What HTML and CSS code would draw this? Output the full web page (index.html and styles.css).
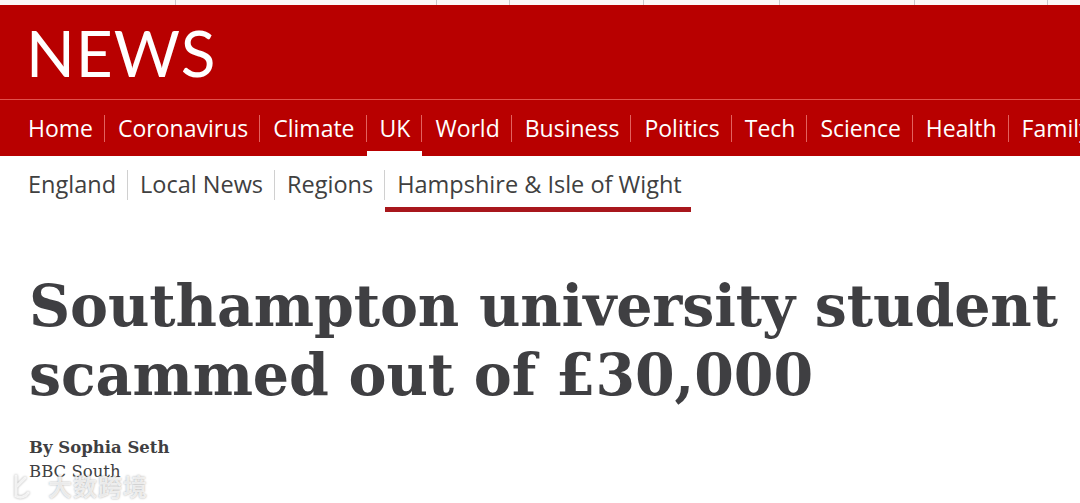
FILE: index.html
```html
<!DOCTYPE html>
<html lang="en">
<head>
<meta charset="utf-8">
<title>Southampton university student scammed out of £30,000 - BBC News</title>
<link rel="stylesheet" href="styles.css">
</head>
<body>
<div class="topstrip">
  <span class="seg" style="width:176px"></span>
  <span class="seg" style="width:261px"></span>
  <span class="seg" style="width:73px"></span>
  <span class="seg" style="width:134px"></span>
  <span class="seg" style="width:136px"></span>
  <span class="seg" style="width:135px"></span>
  <span class="seg" style="width:133px"></span>
</div>
<header class="masthead">
  <div class="logo">NEWS</div>
</header>
<nav class="nav">
  <a class="nav-item">Home</a>
  <a class="nav-item">Coronavirus</a>
  <a class="nav-item">Climate</a>
  <a class="nav-item active">UK</a>
  <a class="nav-item">World</a>
  <a class="nav-item">Business</a>
  <a class="nav-item">Politics</a>
  <a class="nav-item">Tech</a>
  <a class="nav-item">Science</a>
  <a class="nav-item">Health</a>
  <a class="nav-item">Family &amp; Education</a>
</nav>
<nav class="subnav">
  <a class="sub-item">England</a>
  <a class="sub-item">Local News</a>
  <a class="sub-item">Regions</a>
  <a class="sub-item active">Hampshire &amp; Isle of Wight</a>
</nav>
<main class="article">
  <h1 class="headline">Southampton university student scammed out of £30,000</h1>
  <div class="byline">
    <div class="author">By Sophia Seth</div>
    <div class="role">BBC South</div>
  </div>
</main>
<div class="watermark">
  <svg class="wm-icon" width="24" height="26" viewBox="0 0 24 26" aria-hidden="true">
    <path d="M8 3 L8 23 M8 14 L17 5 M20 20 A9 9 0 0 1 8 23" fill="none" stroke="rgba(255,255,255,0.8)" stroke-width="3" stroke-linecap="round"/>
  </svg>
  <span class="wm-text">大数跨境</span>
</div>
</body>
</html>
```
FILE: styles.css
```css
html, body {
  margin: 0;
  padding: 0;
  background: #ffffff;
  overflow: hidden;
}
body {
  width: 1080px;
  height: 503px;
  position: relative;
  font-family: "Open Sans", "Noto Sans", sans-serif;
}
.topstrip {
  height: 5px;
  display: flex;
  background: #fbf7f7;
}
.topstrip .seg {
  display: block;
  height: 5px;
  border-right: 1px solid #c9c9cc;
  box-sizing: border-box;
}
.masthead {
  background: #b80000;
  height: 95px;
  box-sizing: border-box;
  border-bottom: 1px solid #e2504c;
  padding-left: 26px;
  display: flex;
  align-items: flex-start;
}
.logo {
  color: #ffffff;
  font-family: "Lato", "Open Sans", sans-serif;
  font-weight: 400;
  font-size: 64px;
  line-height: 1;
  margin-top: 16px;
  letter-spacing: 1px;
}
.nav {
  background: #b80000;
  height: 56px;
  display: flex;
  align-items: stretch;
  padding-left: 15px;
  white-space: nowrap;
  overflow: hidden;
}
.nav-item {
  color: #ffffff;
  font-size: 23px;
  line-height: 56px;
  padding: 0 12px 0 13px;
  position: relative;
  box-sizing: border-box;
}
.nav-item + .nav-item::before {
  content: "";
  position: absolute;
  left: -1px;
  top: 15px;
  height: 27px;
  border-left: 1px solid #e3625e;
}
.nav-item.active {
  box-shadow: inset 0 -5px 0 #ffffff;
}
.subnav {
  height: 57px;
  display: flex;
  align-items: stretch;
  padding-left: 16px;
  white-space: nowrap;
}
.sub-item {
  color: #404040;
  font-size: 23.5px;
  line-height: 56px;
  padding: 0 12px;
  position: relative;
}
.sub-item + .sub-item::before {
  content: "";
  position: absolute;
  left: -1px;
  top: 14px;
  height: 30px;
  border-left: 1px solid #d0d0d0;
}
.sub-item.active {
  box-shadow: inset 0 -5px 0 #a8171c;
  padding-right: 9px;
  height: 56px;
}
.article {
  padding: 58px 0 0 29px;
}
.headline {
  margin: 0;
  color: #3f3f42;
  font-family: "DejaVu Serif", serif;
  font-weight: 700;
  font-size: 57px;
  line-height: 69px;
  letter-spacing: -0.1px;
  width: 1060px;
}
.byline {
  margin-top: 27px;
  color: #3f3f42;
  font-family: "DejaVu Serif", serif;
  font-size: 16.5px;
  line-height: 24px;
}
.author {
  font-weight: 700;
}
.watermark {
  position: absolute;
  left: 8px;
  top: 468px;
  display: flex;
  align-items: center;
  gap: 16px;
}
.wm-icon {
  display: block;
  filter: drop-shadow(0 0 1px rgba(0, 0, 0, 0.4));
}
.wm-text {
  font-family: "Noto Sans CJK SC", sans-serif;
  font-size: 24px;
  font-weight: 700;
  color: rgba(255, 255, 255, 0.75);
  text-shadow: 0 0 2px rgba(0, 0, 0, 0.35);
  letter-spacing: 1px;
}
```
